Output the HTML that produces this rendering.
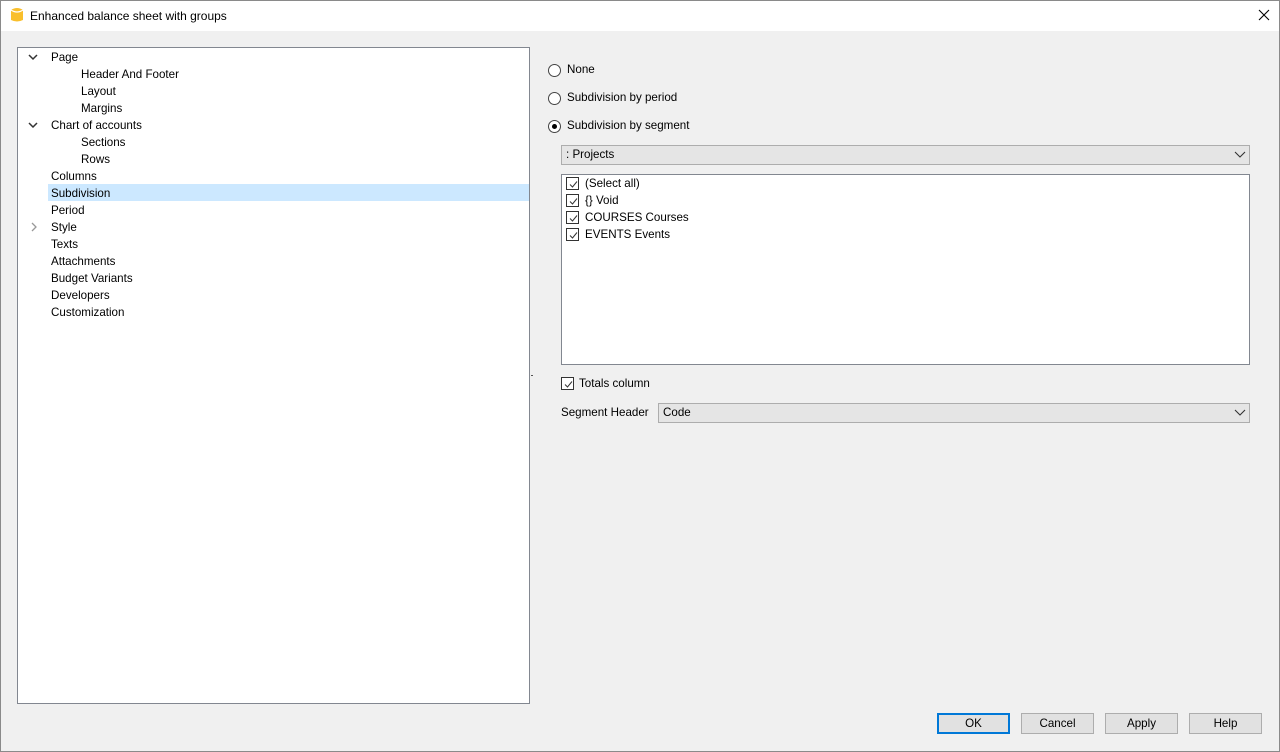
<!DOCTYPE html>
<html><head><meta charset="utf-8"><style>
*{margin:0;padding:0;box-sizing:border-box}
body{width:1280px;height:752px;background:#f0f0f0;font-family:"Liberation Sans",sans-serif;font-size:11.6px;color:#000;position:relative;overflow:hidden}
.a{position:absolute;white-space:nowrap}
.frame{position:absolute;left:0;top:0;width:1280px;height:752px;border:1px solid #8a8a8a;pointer-events:none}
.title{position:absolute;left:0;top:0;width:1280px;height:31px;background:#fff}
.tree{position:absolute;left:17px;top:47px;width:513px;height:657px;background:#fff;border:1px solid #828790}
.row{position:absolute;height:17px;line-height:17px}
.radio{position:absolute;width:13px;height:13px;border:1px solid #444;border-radius:50%;background:#fff}
.cb{position:absolute;width:13px;height:13px;border:1px solid #333;background:#fff}
.cb svg{position:absolute;left:1px;top:1px}
.combo{position:absolute;height:20px;background:#e5e5e5;border:1px solid #adadad;line-height:18px;padding-left:4px}
.btn{position:absolute;top:713px;width:73px;height:21px;background:#e1e1e1;border:1px solid #adadad;text-align:center;line-height:19px}
</style></head><body>
<div class="title"></div>
<svg class="a" style="left:10px;top:7px" width="14" height="16" viewBox="0 0 14 16"><path d="M1 3 Q7 -1 13 3 V13 Q7 16 1 13Z" fill="#f9bf2c"/><path d="M1 3 Q7 7 13 3" stroke="#fff" stroke-width="1.2" fill="none"/></svg>
<div class="a" style="left:30px;top:9px;font-size:12px">Enhanced balance sheet with groups</div>
<svg class="a" style="left:1258px;top:9px" width="12" height="12"><path d="M1 1L11 11M11 1L1 11" stroke="#000" stroke-width="1.1"/></svg>

<div class="tree">
<div class="row" style="left:30px;top:136px;width:481px;background:#cce8ff"></div>
<svg class="a" style="left:10px;top:6px" width="10" height="7"><path d="M1 1L5 5L9 1" stroke="#333" stroke-width="1.5" fill="none"/></svg>
<svg class="a" style="left:10px;top:74px" width="10" height="7"><path d="M1 1L5 5L9 1" stroke="#333" stroke-width="1.5" fill="none"/></svg>
<svg class="a" style="left:13px;top:174px" width="7" height="10"><path d="M1 1L5 5L1 9" stroke="#999" stroke-width="1.3" fill="none"/></svg>
<div class="row" style="left:33px;top:1px">Page</div>
<div class="row" style="left:63px;top:18px">Header And Footer</div>
<div class="row" style="left:63px;top:35px">Layout</div>
<div class="row" style="left:63px;top:52px">Margins</div>
<div class="row" style="left:33px;top:69px">Chart of accounts</div>
<div class="row" style="left:63px;top:86px">Sections</div>
<div class="row" style="left:63px;top:103px">Rows</div>
<div class="row" style="left:33px;top:120px">Columns</div>
<div class="row" style="left:33px;top:137px">Subdivision</div>
<div class="row" style="left:33px;top:154px">Period</div>
<div class="row" style="left:33px;top:171px">Style</div>
<div class="row" style="left:33px;top:188px">Texts</div>
<div class="row" style="left:33px;top:205px">Attachments</div>
<div class="row" style="left:33px;top:222px">Budget Variants</div>
<div class="row" style="left:33px;top:239px">Developers</div>
<div class="row" style="left:33px;top:256px">Customization</div>
</div>
<div class="a" style="left:531px;top:375px;width:2px;height:1px;background:#555"></div>

<div class="radio" style="left:548px;top:64px"></div>
<div class="a" style="left:567px;top:63px">None</div>
<div class="radio" style="left:548px;top:92px"></div>
<div class="a" style="left:567px;top:91px">Subdivision by period</div>
<div class="radio" style="left:548px;top:120px"><div style="position:absolute;left:3px;top:3px;width:5px;height:5px;border-radius:50%;background:#000"></div></div>
<div class="a" style="left:567px;top:119px">Subdivision by segment</div>

<div class="combo" style="left:561px;top:145px;width:689px">: Projects</div>
<svg class="a" style="left:1234px;top:151px" width="12" height="8"><path d="M1 1L6 6L11 1" stroke="#333" stroke-width="1.1" fill="none"/></svg>

<div class="a" style="left:561px;top:174px;width:689px;height:191px;background:#fff;border:1px solid #828790"></div>
<div class="cb" style="left:566px;top:177px"><svg width="11" height="11"><path d="M2 5.5L4.5 8L9 2.5" stroke="#333" stroke-width="1" fill="none"/></svg></div>
<div class="a" style="left:585px;top:177px">(Select all)</div>
<div class="cb" style="left:566px;top:194px"><svg width="11" height="11"><path d="M2 5.5L4.5 8L9 2.5" stroke="#333" stroke-width="1" fill="none"/></svg></div>
<div class="a" style="left:585px;top:194px">{} Void</div>
<div class="cb" style="left:566px;top:211px"><svg width="11" height="11"><path d="M2 5.5L4.5 8L9 2.5" stroke="#333" stroke-width="1" fill="none"/></svg></div>
<div class="a" style="left:585px;top:211px">COURSES Courses</div>
<div class="cb" style="left:566px;top:228px"><svg width="11" height="11"><path d="M2 5.5L4.5 8L9 2.5" stroke="#333" stroke-width="1" fill="none"/></svg></div>
<div class="a" style="left:585px;top:228px">EVENTS Events</div>

<div class="cb" style="left:561px;top:377px"><svg width="11" height="11"><path d="M2 5.5L4.5 8L9 2.5" stroke="#333" stroke-width="1" fill="none"/></svg></div>
<div class="a" style="left:579px;top:377px">Totals column</div>

<div class="a" style="left:561px;top:406px">Segment Header</div>
<div class="combo" style="left:658px;top:403px;width:592px">Code</div>
<svg class="a" style="left:1234px;top:409px" width="12" height="8"><path d="M1 1L6 6L11 1" stroke="#333" stroke-width="1.1" fill="none"/></svg>

<div class="btn" style="left:937px;border:2px solid #0078d7;line-height:17px">OK</div>
<div class="btn" style="left:1021px">Cancel</div>
<div class="btn" style="left:1105px">Apply</div>
<div class="btn" style="left:1189px">Help</div>
<div class="frame"></div>
</body></html>
